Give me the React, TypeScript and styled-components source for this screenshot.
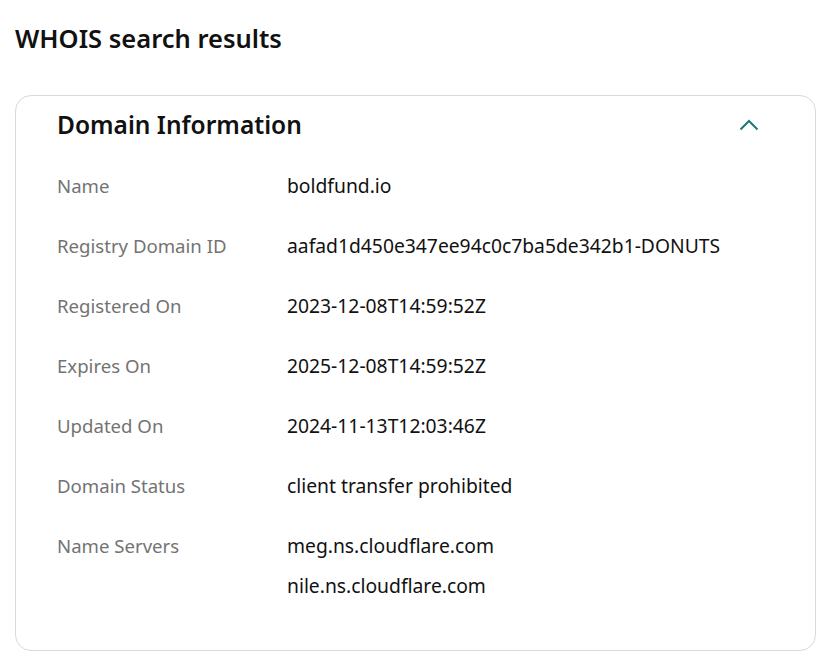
import styled, { createGlobalStyle } from "styled-components";

const GlobalStyle = createGlobalStyle`
  body {
    margin: 0;
    background: #fff;
    font-family: "Noto Sans", "Liberation Sans", sans-serif;
    color: #111;
  }
`;

const Page = styled.div`
  padding: 22px 14px 12px 15px;
`;

const PageTitle = styled.h1`
  margin: 0 0 41px;
  font-size: 25.5px;
  line-height: 32px;
  font-weight: 600;
  color: #111;
`;

const Card = styled.section`
  border: 1px solid #d6dbe0;
  border-radius: 16px;
  padding: 10px 40px 52px 41px;
`;

const Header = styled.div`
  display: flex;
  align-items: center;
  justify-content: space-between;
  height: 38px;
`;

const CardTitle = styled.h2`
  margin: 0;
  font-size: 24.5px;
  line-height: 32px;
  font-weight: 600;
`;

const Toggle = styled.button`
  display: flex;
  align-items: center;
  justify-content: center;
  width: 30px;
  height: 30px;
  padding: 0;
  margin-right: 11px;
  border: none;
  background: none;
  color: #1b7a78;
  cursor: pointer;
`;

const Rows = styled.dl`
  margin: 30px 0 0;
`;

const Row = styled.div`
  display: grid;
  grid-template-columns: 230px 1fr;
  min-height: 60px;
`;

const Label = styled.dt`
  font-size: 18.6px;
  line-height: 24px;
  color: #737373;
`;

const Values = styled.dd`
  margin: 0;
  display: flex;
  flex-direction: column;
  gap: 16px;
  font-size: 19.3px;
  line-height: 24px;
  color: #111;
`;

const data: [string, string[]][] = [
  ["Name", ["boldfund.io"]],
  ["Registry Domain ID", ["aafad1d450e347ee94c0c7ba5de342b1-DONUTS"]],
  ["Registered On", ["2023-12-08T14:59:52Z"]],
  ["Expires On", ["2025-12-08T14:59:52Z"]],
  ["Updated On", ["2024-11-13T12:03:46Z"]],
  ["Domain Status", ["client transfer prohibited"]],
  ["Name Servers", ["meg.ns.cloudflare.com", "nile.ns.cloudflare.com"]],
];

export default function App() {
  return (
    <>
      <GlobalStyle />
      <Page>
        <PageTitle>WHOIS search results</PageTitle>
        <Card>
          <Header>
            <CardTitle>Domain Information</CardTitle>
            <Toggle aria-label="Collapse">
              <svg width="20" height="12" viewBox="0 0 20 12" fill="none">
                <path d="M1.5 10.5L10 2l8.5 8.5" stroke="currentColor" strokeWidth="2" />
              </svg>
            </Toggle>
          </Header>
          <Rows>
            {data.map(([label, values]) => (
              <Row key={label}>
                <Label>{label}</Label>
                <Values>
                  {values.map((v) => (
                    <span key={v}>{v}</span>
                  ))}
                </Values>
              </Row>
            ))}
          </Rows>
        </Card>
      </Page>
    </>
  );
}
